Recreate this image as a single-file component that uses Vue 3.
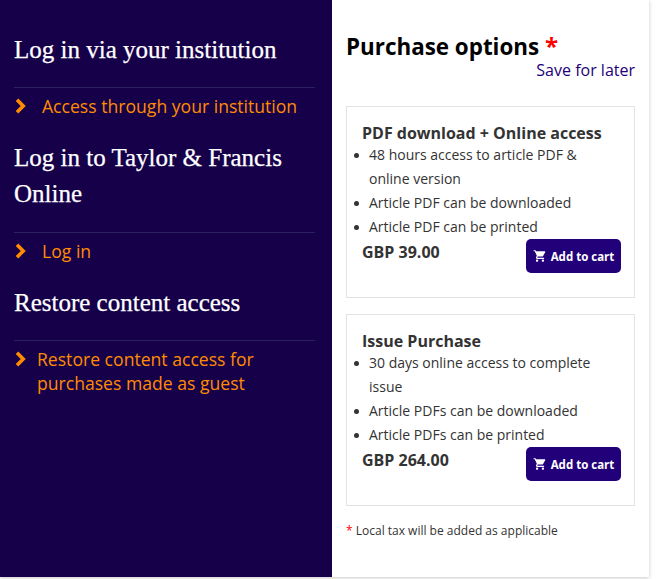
<script setup>
const sections = [
  { title: 'Log in via your institution', cls: 'one', link: 'Access through your institution', gap: 'wide' },
  { title: 'Log in to Taylor & Francis Online', cls: 'two', link: 'Log in', gap: 'wide' },
  { title: 'Restore content access', cls: 'three', link: 'Restore content access for purchases made as guest', gap: 'narrow' }
]
const options = [
  { title: 'PDF download + Online access', items: ['48 hours access to article PDF & online version', 'Article PDF can be downloaded', 'Article PDF can be printed'], price: 'GBP 39.00' },
  { title: 'Issue Purchase', items: ['30 days online access to complete issue', 'Article PDFs can be downloaded', 'Article PDFs can be printed'], price: 'GBP 264.00' }
]
</script>

<template>
  <div class="page">
    <div class="panel">
      <aside class="left">
        <section v-for="s in sections" :key="s.title" class="sec" :class="s.cls">
          <h2 class="sec-title">{{ s.title }}</h2>
          <a class="sec-link" :class="s.gap">
            <svg class="chev" width="12" height="16" viewBox="0 0 12 16"><path d="M3 1.800 9.200 8 3 14.200" fill="none" stroke="#ff8c00" stroke-width="3.600"/></svg>
            <span>{{ s.link }}</span>
          </a>
        </section>
      </aside>
      <main class="right">
        <h1 class="head">Purchase options <span class="star">*</span></h1>
        <a class="save">Save for later</a>
        <div v-for="o in options" :key="o.title" class="card">
          <h3 class="card-title">{{ o.title }}</h3>
          <ul class="list">
            <li v-for="i in o.items" :key="i">{{ i }}</li>
          </ul>
          <div class="foot">
            <span class="price">{{ o.price }}</span>
            <button class="btn">
              <svg width="14" height="14" viewBox="0 0 24 24"><path fill="#fff" d="M7 18c-1.100 0-2 .9-2 2s.9 2 2 2 2-.9 2-2-.9-2-2-2zM1 2v2h2l3.600 7.590-1.350 2.450c-.16.28-.25.61-.25.96 0 1.100.9 2 2 2h12v-2H7.420c-.14 0-.25-.11-.25-.25l.03-.12.9-1.630h7.450c.75 0 1.410-.41 1.750-1.030l3.580-6.490A1 1 0 0 0 20 4H5.210l-.94-2H1zm16 16c-1.100 0-2 .9-2 2s.9 2 2 2 2-.9 2-2-.9-2-2-2z"/></svg>
              <span>Add to cart</span>
            </button>
          </div>
        </div>
        <p class="note"><span class="star">*</span> Local tax will be added as applicable</p>
      </main>
    </div>
  </div>
</template>

<style>
html, body { margin: 0; background: #fff; }
</style>

<style scoped>
.page { width: 656px; height: 579px; overflow: hidden; font-family: "Open Sans", "Noto Sans", sans-serif; background: #fff; }
.panel { display: flex; width: 649px; height: 577px; background: #fff; box-shadow: 0 1px 4px rgba(0,0,0,.22); }
.left { width: 332px; flex: none; background: #16004a; padding: 32px 17px 0 14px; box-sizing: border-box; }
.sec-title { margin: 0; font-family: "Liberation Serif", "DejaVu Serif", serif; font-weight: 400; font-size: 25px; line-height: 36px; color: #fff; border-bottom: 1px solid #2b2060; -webkit-text-stroke: 0.25px #fff; }
.one .sec-title { padding-bottom: 19px; }
.two .sec-title { padding-bottom: 20px; }
.three .sec-title { padding-bottom: 19px; }
.sec-link { display: flex; align-items: flex-start; color: #ff8c00; font-size: 17.6px; line-height: 24px; margin-top: 6px; }
.sec-link.wide { padding-bottom: 22px; }
.sec-link.wide span { margin-left: 16px; }
.sec-link.narrow span { margin-left: 11px; width: 250px; }
.chev { flex: none; margin-top: 4px; }
.right { flex: 1; padding: 32px 14px 0; min-width: 0; }
.head { margin: 0; font-size: 22.4px; line-height: 28px; font-weight: 700; color: #000; }
.head .star { font-size: 24px; }
.star { color: #f00; }
.save { display: block; text-align: right; font-size: 16px; line-height: 24px; color: #22007a; margin-top: -3px; }
.card { border: 1px solid #e3e3e3; padding: 14px 13px 14px 15px; margin-top: 16px; height: 192px; box-sizing: border-box; }
.card:first-of-type { margin-top: 24px; }
.card-title { margin: 0; font-size: 16px; line-height: 24px; margin-bottom: -2px; font-weight: 700; color: #333; }
.list { margin: 0; padding: 0 24px 0 7px; list-style: none; color: #333; font-size: 14px; line-height: 24px; }
.list li { position: relative; }
.list li::before { content: ""; position: absolute; left: -15px; top: 10px; width: 5px; height: 5px; border-radius: 50%; background: #333; }
.foot { display: flex; justify-content: space-between; align-items: flex-start; }
.price { font-size: 16px; line-height: 24px; padding-top: 1px; font-weight: 700; color: #333; }
.btn { display: flex; align-items: center; justify-content: center; gap: 4px; width: 95px; height: 34px; border: 0; border-radius: 5px; background: #22007a; color: #fff; font-family: inherit; font-size: 11.5px; font-weight: 700; padding: 0; margin-top: 0; }
.note { margin: 16px 0 0; font-size: 12px; line-height: 18px; color: #333; }
</style>
